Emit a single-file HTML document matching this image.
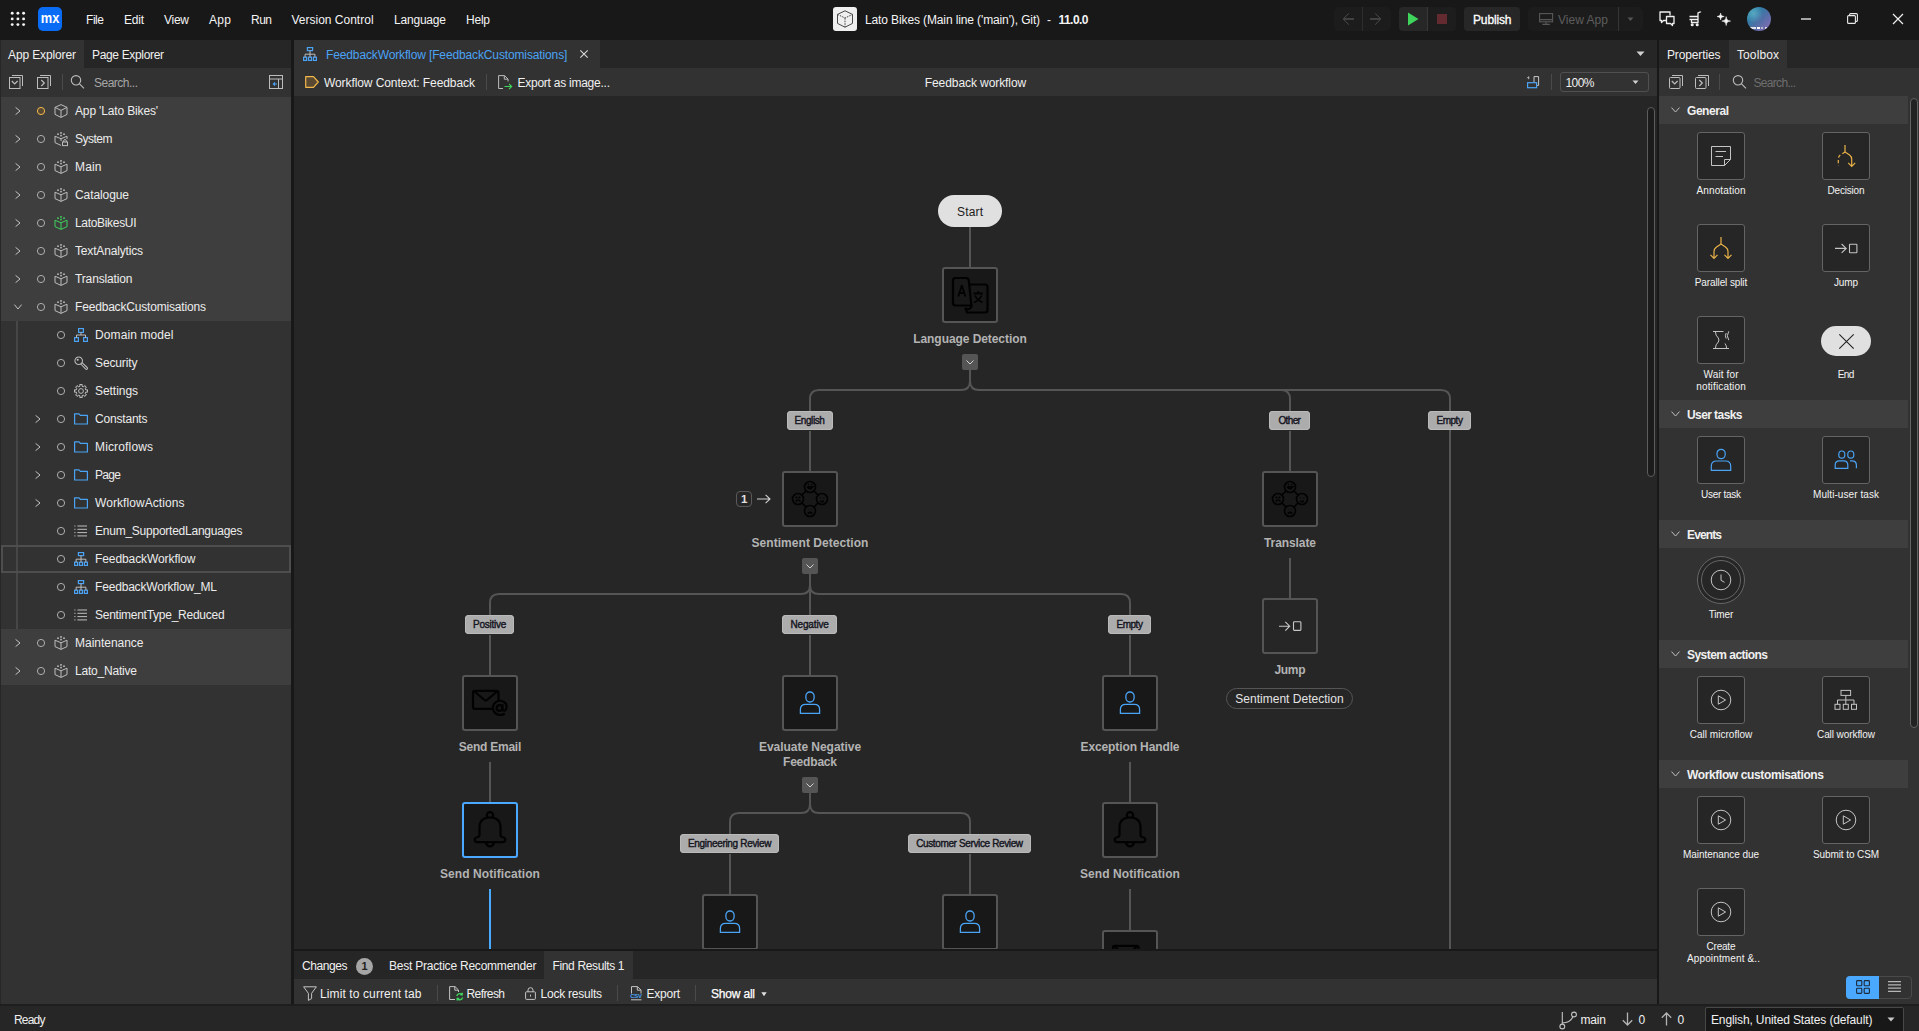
<!DOCTYPE html>
<html><head><meta charset="utf-8"><title>Mendix Studio Pro</title><style>
html,body{margin:0;padding:0;}
body{width:1919px;height:1031px;overflow:hidden;background:#262626;font-family:"Liberation Sans", sans-serif;position:relative;}
.a{position:absolute;}
.t{white-space:nowrap;letter-spacing:-0.2px;}
.t span{display:inline-block;}
svg{overflow:visible;}
</style></head>
<body>
<div class="a" style="left:0px;top:40px;width:1919px;height:964px;background:#181818;"></div>
<div class="a" style="left:0px;top:0px;width:1919px;height:40px;background:#181818;"></div>
<svg class="a" style="left:9.8px;top:11px;" width="16" height="16" viewBox="0 0 16 16"><circle cx="2.2" cy="2.2" r="1.45" fill="#f4f4f4"></circle><circle cx="2.2" cy="7.9" r="1.45" fill="#f4f4f4"></circle><circle cx="2.2" cy="13.600000000000001" r="1.45" fill="#f4f4f4"></circle><circle cx="7.9" cy="2.2" r="1.45" fill="#f4f4f4"></circle><circle cx="7.9" cy="7.9" r="1.45" fill="#f4f4f4"></circle><circle cx="7.9" cy="13.600000000000001" r="1.45" fill="#f4f4f4"></circle><circle cx="13.600000000000001" cy="2.2" r="1.45" fill="#f4f4f4"></circle><circle cx="13.600000000000001" cy="7.9" r="1.45" fill="#f4f4f4"></circle><circle cx="13.600000000000001" cy="13.600000000000001" r="1.45" fill="#f4f4f4"></circle></svg>
<div class="a" style="left:38px;top:7px;width:24px;height:24px;background:#0a6cf5;border-radius:5px;"></div>
<svg class="a" style="left:38px;top:7px;" width="24" height="24" viewBox="0 0 24 24"><text x="2.8" y="15.9" font-family="Liberation Sans" font-weight="bold" font-size="15" fill="#fff" textLength="18.6" lengthAdjust="spacingAndGlyphs">mx</text></svg>
<div class="a t" style="top:11.5px;height:16px;line-height:16px;font-size:12px;color:#f4f4f4;left:86px;"><span style="letter-spacing: -0.45px; margin-right: 0.45px;">File</span></div>
<div class="a t" style="top:11.5px;height:16px;line-height:16px;font-size:12px;color:#f4f4f4;left:124px;"><span style="letter-spacing: -0.23px; margin-right: 0.23px;">Edit</span></div>
<div class="a t" style="top:11.5px;height:16px;line-height:16px;font-size:12px;color:#f4f4f4;left:164px;"><span style="letter-spacing: -0.27px; margin-right: 0.27px;">View</span></div>
<div class="a t" style="top:11.5px;height:16px;line-height:16px;font-size:12px;color:#f4f4f4;left:209px;"><span style="letter-spacing: 0.32px; margin-right: -0.32px;">App</span></div>
<div class="a t" style="top:11.5px;height:16px;line-height:16px;font-size:12px;color:#f4f4f4;left:251px;"><span style="letter-spacing: -0.51px; margin-right: 0.51px;">Run</span></div>
<div class="a t" style="top:11.5px;height:16px;line-height:16px;font-size:12px;color:#f4f4f4;left:291.5px;"><span style="letter-spacing: 0px; margin-right: 0px;">Version Control</span></div>
<div class="a t" style="top:11.5px;height:16px;line-height:16px;font-size:12px;color:#f4f4f4;left:394px;"><span style="letter-spacing: -0.2px; margin-right: 0.2px;">Language</span></div>
<div class="a t" style="top:11.5px;height:16px;line-height:16px;font-size:12px;color:#f4f4f4;left:466px;"><span style="letter-spacing: -0.23px; margin-right: 0.23px;">Help</span></div>
<div class="a" style="left:833px;top:7px;width:24px;height:24px;background:#f0f0f0;border-radius:3px;"></div>
<svg class="a" style="left:836px;top:10px;" width="18" height="18" viewBox="0 0 18 18"><g fill="none" stroke="#4a4a4a" stroke-width="1" stroke-linejoin="round"><path d="M9 0.8 L16.5 4.4 L16.5 13.4 L9 17.2 L1.5 13.4 L1.5 4.4 Z"></path><path d="M1.5 4.4 L9 8 L16.5 4.4 M9 8 L9 17.2" stroke-dasharray="1.6 1"></path></g></svg>
<div class="a t" style="top:11.5px;height:16px;line-height:16px;font-size:12px;color:#f4f4f4;left:865px;"><span style="letter-spacing: -0.12px; margin-right: 0.12px;">Lato Bikes (Main line ('main'), Git)</span></div>
<div class="a t" style="top:11.5px;height:16px;line-height:16px;font-size:12px;color:#f4f4f4;left:1047px;"><span>-</span></div>
<div class="a t" style="top:11.5px;height:16px;line-height:16px;font-size:12px;color:#f4f4f4;font-weight:bold;left:1058.5px;"><span style="letter-spacing: -0.54px; margin-right: 0.54px;">11.0.0</span></div>
<div class="a" style="left:1334px;top:7px;width:57px;height:24px;background:#1c1c1c;border-radius:5px;"></div>
<div class="a" style="left:1362px;top:7px;width:1px;height:24px;background:#2e2e2e;"></div>
<svg class="a" style="left:1342px;top:13px;" width="12" height="12" viewBox="0 0 12 12"><path d="M12 6 H2" fill="none" stroke="#484848" stroke-width="1.7"></path><path d="M6.8 0.4 L1.2 6 L6.8 11.6" fill="none" stroke="#4c4c4c" stroke-width="1"></path></svg>
<svg class="a" style="left:1370px;top:13px;" width="12" height="12" viewBox="0 0 12 12"><path d="M0 6 H10" fill="none" stroke="#484848" stroke-width="1.7"></path><path d="M5.2 0.4 L10.8 6 L5.2 11.6" fill="none" stroke="#4c4c4c" stroke-width="1"></path></svg>
<div class="a" style="left:1399px;top:7px;width:28px;height:24px;background:#272727;border-radius:4px;border-radius:4px 0 0 4px;"></div>
<div class="a" style="left:1427px;top:7px;width:29px;height:24px;background:#1d1d1d;border-radius:0 4px 4px 0;"></div>
<div class="a" style="left:1427px;top:7px;width:1px;height:24px;background:#383838;"></div>
<svg class="a" style="left:1407px;top:12px;" width="12" height="14" viewBox="0 0 12 14"><path d="M1 0.5 L11.5 7 L1 13.5 Z" fill="#3fd45c"></path></svg>
<div class="a" style="left:1437px;top:14px;width:10px;height:10px;background:#632a2f;"></div>
<div class="a" style="left:1464px;top:7px;width:56px;height:24px;background:#272727;border-radius:4px;"></div>
<div class="a t" style="top:11.5px;height:16px;line-height:16px;font-size:12px;color:#ffffff;left:1473px;-webkit-text-stroke:0.3px #fff;"><span style="letter-spacing: -0.14px; margin-right: 0.14px;">Publish</span></div>
<div class="a" style="left:1528px;top:7px;width:115px;height:24px;background:#1c1c1c;border-radius:5px;"></div>
<div class="a" style="left:1618px;top:7px;width:1px;height:24px;background:#353535;"></div>
<svg class="a" style="left:1539px;top:13px;" width="15" height="13" viewBox="0 0 15 13"><g fill="none" stroke="#585858" stroke-width="1.1"><rect x="0.6" y="0.6" width="13" height="8.2"></rect><path d="M0.6 6.6 H13.6 M7.1 8.8 V11.2 M3.4 11.4 H10.8"></path></g></svg>
<div class="a t" style="top:11.5px;height:16px;line-height:16px;font-size:12px;color:#5c5c5c;left:1558px;"><span style="letter-spacing: 0.02px; margin-right: -0.02px;">View App</span></div>
<svg class="a" style="left:1627px;top:17px;" width="8" height="5" viewBox="0 0 8 5"><path d="M0.5 0.5 H6.5 L3.5 4 Z" fill="#555"></path></svg>
<svg class="a" style="left:1659px;top:11px;" width="17" height="16" viewBox="0 0 17 16"><g fill="none" stroke="#f0f0f0" stroke-width="1.3" stroke-linejoin="round"><path d="M7.5 9.5 H4.5 L2.5 11.5 V9.5 H1 V1 H11 V4.5"></path><path d="M7.5 5.5 H15 V12.5 H13.5 V14.5 L11.5 12.5 H7.5 Z" fill="#1b1b1b"></path></g></svg>
<svg class="a" style="left:1689px;top:11px;" width="13" height="16" viewBox="0 0 13 16"><g fill="none" stroke="#f0f0f0" stroke-width="1.3"><path d="M0.5 5.5 H8.5 M0.5 8.5 H8.5 M2.5 8.5 V11.5 H9 V2 L11.5 0.8 V0.5"></path><circle cx="3.2" cy="13.8" r="0.9" fill="#f0f0f0"></circle><circle cx="8.2" cy="13.8" r="0.9" fill="#f0f0f0"></circle></g></svg>
<svg class="a" style="left:1716.5px;top:12.5px;" width="15" height="14" viewBox="0 0 15 14"><g fill="#f8f8f8" stroke="#f8f8f8" stroke-width="0.5" stroke-linejoin="round"><path d="M3.6 0 C4 2.4 4.6 3 7.2 3.5 C4.6 4 4 4.6 3.6 7 C3.2 4.6 2.6 4 0 3.5 C2.6 3 3.2 2.4 3.6 0 Z"></path><path d="M9.2 3.6 C9.7 6.8 10.4 7.6 13.6 8.1 C10.4 8.6 9.7 9.4 9.2 12.6 C8.7 9.4 8 8.6 4.8 8.1 C8 7.6 8.7 6.8 9.2 3.6 Z"></path></g></svg>
<div class="a" style="left:1747px;top:7px;width:24px;height:24px;border-radius:12px;overflow:hidden;background:radial-gradient(circle at 28% 28%, rgba(120,200,215,0.55) 0%, rgba(120,200,215,0) 38%),linear-gradient(135deg,#3f97b2 0%,#2f7da6 30%,#4f6fa6 55%,#7a6cb0 85%,#7058a0 100%);"><div class="a" style="left:3px;top:20px;width:6px;height:1.6px;background:#f0f0f0;opacity:.9"></div><div class="a" style="left:9.5px;top:20px;width:3.5px;height:1.6px;background:#fff;"></div><div class="a" style="left:14px;top:20.4px;width:2px;height:1.2px;background:#ddd;opacity:.7"></div><div class="a" style="left:17.5px;top:20.2px;width:2px;height:1.4px;background:#eee;opacity:.8"></div></div>
<div class="a" style="left:1801px;top:18px;width:10px;height:2px;background:#a4a4a4;"></div>
<svg class="a" style="left:1847px;top:13px;" width="11" height="11" viewBox="0 0 11 11"><g fill="none" stroke="#e8e8e8" stroke-width="1.1"><rect x="0.6" y="2.6" width="7.8" height="7.8" rx="1"></rect><path d="M2.6 2.6 V1.6 Q2.6 0.6 3.6 0.6 H9.4 Q10.4 0.6 10.4 1.6 V7.4 Q10.4 8.4 9.4 8.4 H8.4"></path></g></svg>
<svg class="a" style="left:1893px;top:14px;" width="10" height="10" viewBox="0 0 10 10"><path d="M0 0 L10 10 M10 0 L0 10" stroke="#f0f0f0" stroke-width="1.2" fill="none"></path></svg>
<div class="a" style="left:0px;top:40px;width:291px;height:964px;background:#323232;"></div>
<div class="a" style="left:0px;top:40px;width:1px;height:964px;background:#272727;"></div>
<div class="a" style="left:84px;top:40px;width:207px;height:28px;background:#262626;"></div>
<div class="a t" style="top:46.5px;height:16px;line-height:16px;font-size:12px;color:#f0f0f0;left:8px;"><span style="letter-spacing: -0.12px; margin-right: 0.12px;">App Explorer</span></div>
<div class="a t" style="top:46.5px;height:16px;line-height:16px;font-size:12px;color:#f0f0f0;left:92px;"><span style="letter-spacing: -0.34px; margin-right: 0.34px;">Page Explorer</span></div>
<svg class="a" style="left:9px;top:75px;" width="14" height="14" viewBox="0 0 14 14"><g fill="none" stroke="#bdbdbd" stroke-width="1"><rect x="0.5" y="2.5" width="10.5" height="11"></rect><path d="M3 0.5 H13.5 V11"></path><path d="M2.8 6 L5.7 9 L8.6 6" stroke-width="1.2"></path></g></svg>
<svg class="a" style="left:37px;top:75px;" width="14" height="14" viewBox="0 0 14 14"><g fill="none" stroke="#bdbdbd" stroke-width="1"><rect x="0.5" y="2.5" width="10.5" height="11"></rect><path d="M3 0.5 H13.5 V11"></path><path d="M4.3 5 L7.3 8 L4.3 11" stroke-width="1.2"></path></g></svg>
<div class="a" style="left:62px;top:74px;width:1px;height:16px;background:#4a4a4a;"></div>
<svg class="a" style="left:70px;top:74px;" width="16" height="16" viewBox="0 0 16 16"><g fill="none" stroke="#bdbdbd" stroke-width="1.1"><circle cx="6" cy="6.3" r="4.7"></circle><path d="M9.5 9.9 L14 14.4"></path></g></svg>
<div class="a t" style="top:74.5px;height:16px;line-height:16px;font-size:12px;color:#a6a6a6;left:94px;"><span style="letter-spacing: -0.5px; margin-right: 0.5px;">Search...</span></div>
<svg class="a" style="left:269px;top:75px;" width="14" height="14" viewBox="0 0 14 14"><g fill="none" stroke="#bdbdbd" stroke-width="1"><rect x="0.5" y="0.5" width="13" height="13"></rect><path d="M0.5 4 H13.5 M9.5 4 V13.5"></path></g><path d="M8 9 H4.5 M6 7.3 L4.3 9 L6 10.7" fill="none" stroke="#4aa3f5" stroke-width="1.1"></path></svg>
<div class="a" style="left:1px;top:97px;width:290px;height:224px;background:#3e3e3e;"></div>
<div class="a" style="left:1px;top:629px;width:290px;height:56px;background:#3e3e3e;"></div>
<div class="a" style="left:16px;top:321px;width:2px;height:308px;background:#474747;"></div>
<svg class="a" style="left:14.5px;top:107px;" width="6" height="8" viewBox="0 0 6 8"><path d="M0.6 0.4 L5 4 L0.6 7.6" fill="none" stroke="#c4c4c4" stroke-width="1"></path></svg>
<svg class="a" style="left:36px;top:106px;" width="10" height="10" viewBox="0 0 10 10"><circle cx="5" cy="5" r="3.6" fill="#5a4932" stroke="#f2b84b" stroke-width="1"></circle></svg>
<svg class="a" style="left:54px;top:104px;" width="14" height="14" viewBox="0 0 14 14"><g fill="none" stroke="#bdbdbd" stroke-width="1" stroke-linejoin="round"><path d="M7 0.6 L13 3.4 L13 10.4 L7 13.4 L1 10.4 L1 3.4 Z"></path><path d="M1 3.4 L7 6.4 L13 3.4 M7 6.4 V13.4"></path></g></svg>
<div class="a t" style="top:103.0px;height:16px;line-height:16px;font-size:12px;color:#ececec;left:75px;"><span style="letter-spacing: -0.15px; margin-right: 0.15px;">App 'Lato Bikes'</span></div>
<svg class="a" style="left:14.5px;top:135px;" width="6" height="8" viewBox="0 0 6 8"><path d="M0.6 0.4 L5 4 L0.6 7.6" fill="none" stroke="#c4c4c4" stroke-width="1"></path></svg>
<svg class="a" style="left:36px;top:134px;" width="10" height="10" viewBox="0 0 10 10"><circle cx="5" cy="5" r="3.6" fill="none" stroke="#adadad" stroke-width="1"></circle></svg>
<svg class="a" style="left:54px;top:132px;" width="14" height="14" viewBox="0 0 14 14"><rect x="6.2" y="0.09999999999999998" width="1.6" height="1.6" fill="#bdbdbd"></rect><rect x="3.2" y="1.4000000000000001" width="1.6" height="1.6" fill="#bdbdbd"></rect><rect x="9.2" y="1.4000000000000001" width="1.6" height="1.6" fill="#bdbdbd"></rect><rect x="6.2" y="2.8" width="1.6" height="1.6" fill="#bdbdbd"></rect><g fill="none" stroke="#bdbdbd" stroke-width="1" stroke-linejoin="round"><path d="M1 4.2 V10.6 L7 13.4 "></path><path d="M1 4.2 L7 6.8 L13 4.2 V7 M7 6.8 V9"></path></g><g fill="none" stroke="#bdbdbd" stroke-width="1"><rect x="8.5" y="10" width="5" height="3.6"></rect><path d="M9.7 10 V8.8 Q9.7 7.6 11 7.6 Q12.3 7.6 12.3 8.8 V10"></path></g></svg>
<div class="a t" style="top:131.0px;height:16px;line-height:16px;font-size:12px;color:#ececec;left:75px;"><span style="letter-spacing: -0.5px; margin-right: 0.5px;">System</span></div>
<svg class="a" style="left:14.5px;top:163px;" width="6" height="8" viewBox="0 0 6 8"><path d="M0.6 0.4 L5 4 L0.6 7.6" fill="none" stroke="#c4c4c4" stroke-width="1"></path></svg>
<svg class="a" style="left:36px;top:162px;" width="10" height="10" viewBox="0 0 10 10"><circle cx="5" cy="5" r="3.6" fill="none" stroke="#adadad" stroke-width="1"></circle></svg>
<svg class="a" style="left:54px;top:160px;" width="14" height="14" viewBox="0 0 14 14"><rect x="6.2" y="0.09999999999999998" width="1.6" height="1.6" fill="#bdbdbd"></rect><rect x="3.2" y="1.4000000000000001" width="1.6" height="1.6" fill="#bdbdbd"></rect><rect x="9.2" y="1.4000000000000001" width="1.6" height="1.6" fill="#bdbdbd"></rect><rect x="6.2" y="2.8" width="1.6" height="1.6" fill="#bdbdbd"></rect><g fill="none" stroke="#bdbdbd" stroke-width="1" stroke-linejoin="round"><path d="M1 4.2 V10.6 L7 13.4 L13 10.6 V4.2"></path><path d="M1 4.2 L7 6.8 L13 4.2  M7 6.8 V13.4"></path></g></svg>
<div class="a t" style="top:159.0px;height:16px;line-height:16px;font-size:12px;color:#ececec;left:75px;"><span style="letter-spacing: 0.16px; margin-right: -0.16px;">Main</span></div>
<svg class="a" style="left:14.5px;top:191px;" width="6" height="8" viewBox="0 0 6 8"><path d="M0.6 0.4 L5 4 L0.6 7.6" fill="none" stroke="#c4c4c4" stroke-width="1"></path></svg>
<svg class="a" style="left:36px;top:190px;" width="10" height="10" viewBox="0 0 10 10"><circle cx="5" cy="5" r="3.6" fill="none" stroke="#adadad" stroke-width="1"></circle></svg>
<svg class="a" style="left:54px;top:188px;" width="14" height="14" viewBox="0 0 14 14"><rect x="6.2" y="0.09999999999999998" width="1.6" height="1.6" fill="#bdbdbd"></rect><rect x="3.2" y="1.4000000000000001" width="1.6" height="1.6" fill="#bdbdbd"></rect><rect x="9.2" y="1.4000000000000001" width="1.6" height="1.6" fill="#bdbdbd"></rect><rect x="6.2" y="2.8" width="1.6" height="1.6" fill="#bdbdbd"></rect><g fill="none" stroke="#bdbdbd" stroke-width="1" stroke-linejoin="round"><path d="M1 4.2 V10.6 L7 13.4 L13 10.6 V4.2"></path><path d="M1 4.2 L7 6.8 L13 4.2  M7 6.8 V13.4"></path></g></svg>
<div class="a t" style="top:187.0px;height:16px;line-height:16px;font-size:12px;color:#ececec;left:75px;"><span style="letter-spacing: -0.09px; margin-right: 0.09px;">Catalogue</span></div>
<svg class="a" style="left:14.5px;top:219px;" width="6" height="8" viewBox="0 0 6 8"><path d="M0.6 0.4 L5 4 L0.6 7.6" fill="none" stroke="#c4c4c4" stroke-width="1"></path></svg>
<svg class="a" style="left:36px;top:218px;" width="10" height="10" viewBox="0 0 10 10"><circle cx="5" cy="5" r="3.6" fill="none" stroke="#adadad" stroke-width="1"></circle></svg>
<svg class="a" style="left:54px;top:216px;" width="14" height="14" viewBox="0 0 14 14"><rect x="6.2" y="0.09999999999999998" width="1.6" height="1.6" fill="#3fd45c"></rect><rect x="3.2" y="1.4000000000000001" width="1.6" height="1.6" fill="#3fd45c"></rect><rect x="9.2" y="1.4000000000000001" width="1.6" height="1.6" fill="#3fd45c"></rect><rect x="6.2" y="2.8" width="1.6" height="1.6" fill="#3fd45c"></rect><g fill="none" stroke="#3fd45c" stroke-width="1" stroke-linejoin="round"><path d="M1 4.2 V10.6 L7 13.4 L13 10.6 V4.2"></path><path d="M1 4.2 L7 6.8 L13 4.2  M7 6.8 V13.4"></path></g></svg>
<div class="a t" style="top:215.0px;height:16px;line-height:16px;font-size:12px;color:#ececec;left:75px;"><span style="letter-spacing: -0.32px; margin-right: 0.32px;">LatoBikesUI</span></div>
<svg class="a" style="left:14.5px;top:247px;" width="6" height="8" viewBox="0 0 6 8"><path d="M0.6 0.4 L5 4 L0.6 7.6" fill="none" stroke="#c4c4c4" stroke-width="1"></path></svg>
<svg class="a" style="left:36px;top:246px;" width="10" height="10" viewBox="0 0 10 10"><circle cx="5" cy="5" r="3.6" fill="none" stroke="#adadad" stroke-width="1"></circle></svg>
<svg class="a" style="left:54px;top:244px;" width="14" height="14" viewBox="0 0 14 14"><rect x="6.2" y="0.09999999999999998" width="1.6" height="1.6" fill="#bdbdbd"></rect><rect x="3.2" y="1.4000000000000001" width="1.6" height="1.6" fill="#bdbdbd"></rect><rect x="9.2" y="1.4000000000000001" width="1.6" height="1.6" fill="#bdbdbd"></rect><rect x="6.2" y="2.8" width="1.6" height="1.6" fill="#bdbdbd"></rect><g fill="none" stroke="#bdbdbd" stroke-width="1" stroke-linejoin="round"><path d="M1 4.2 V10.6 L7 13.4 L13 10.6 V4.2"></path><path d="M1 4.2 L7 6.8 L13 4.2  M7 6.8 V13.4"></path></g></svg>
<div class="a t" style="top:243.0px;height:16px;line-height:16px;font-size:12px;color:#ececec;left:75px;"><span style="letter-spacing: -0.17px; margin-right: 0.17px;">TextAnalytics</span></div>
<svg class="a" style="left:14.5px;top:275px;" width="6" height="8" viewBox="0 0 6 8"><path d="M0.6 0.4 L5 4 L0.6 7.6" fill="none" stroke="#c4c4c4" stroke-width="1"></path></svg>
<svg class="a" style="left:36px;top:274px;" width="10" height="10" viewBox="0 0 10 10"><circle cx="5" cy="5" r="3.6" fill="none" stroke="#adadad" stroke-width="1"></circle></svg>
<svg class="a" style="left:54px;top:272px;" width="14" height="14" viewBox="0 0 14 14"><rect x="6.2" y="0.09999999999999998" width="1.6" height="1.6" fill="#bdbdbd"></rect><rect x="3.2" y="1.4000000000000001" width="1.6" height="1.6" fill="#bdbdbd"></rect><rect x="9.2" y="1.4000000000000001" width="1.6" height="1.6" fill="#bdbdbd"></rect><rect x="6.2" y="2.8" width="1.6" height="1.6" fill="#bdbdbd"></rect><g fill="none" stroke="#bdbdbd" stroke-width="1" stroke-linejoin="round"><path d="M1 4.2 V10.6 L7 13.4 L13 10.6 V4.2"></path><path d="M1 4.2 L7 6.8 L13 4.2  M7 6.8 V13.4"></path></g></svg>
<div class="a t" style="top:271.0px;height:16px;line-height:16px;font-size:12px;color:#ececec;left:75px;"><span style="letter-spacing: -0.14px; margin-right: 0.14px;">Translation</span></div>
<svg class="a" style="left:13.5px;top:304px;" width="8" height="6" viewBox="0 0 8 6"><path d="M0.4 0.6 L4 5 L7.6 0.6" fill="none" stroke="#c4c4c4" stroke-width="1"></path></svg>
<svg class="a" style="left:36px;top:302px;" width="10" height="10" viewBox="0 0 10 10"><circle cx="5" cy="5" r="3.6" fill="none" stroke="#adadad" stroke-width="1"></circle></svg>
<svg class="a" style="left:54px;top:300px;" width="14" height="14" viewBox="0 0 14 14"><rect x="6.2" y="0.09999999999999998" width="1.6" height="1.6" fill="#bdbdbd"></rect><rect x="3.2" y="1.4000000000000001" width="1.6" height="1.6" fill="#bdbdbd"></rect><rect x="9.2" y="1.4000000000000001" width="1.6" height="1.6" fill="#bdbdbd"></rect><rect x="6.2" y="2.8" width="1.6" height="1.6" fill="#bdbdbd"></rect><g fill="none" stroke="#bdbdbd" stroke-width="1" stroke-linejoin="round"><path d="M1 4.2 V10.6 L7 13.4 L13 10.6 V4.2"></path><path d="M1 4.2 L7 6.8 L13 4.2  M7 6.8 V13.4"></path></g></svg>
<div class="a t" style="top:299.0px;height:16px;line-height:16px;font-size:12px;color:#ececec;left:75px;"><span style="letter-spacing: -0.18px; margin-right: 0.18px;">FeedbackCustomisations</span></div>
<svg class="a" style="left:56px;top:330px;" width="10" height="10" viewBox="0 0 10 10"><circle cx="5" cy="5" r="3.6" fill="none" stroke="#adadad" stroke-width="1"></circle></svg>
<svg class="a" style="left:74px;top:328px;" width="14" height="14" viewBox="0 0 14 14"><g fill="none" stroke="#4aa3f5" stroke-width="1.2"><rect x="4.6" y="0.6" width="4.8" height="3.8"></rect><rect x="0.6" y="9.6" width="3.8" height="3.8"></rect><rect x="9.6" y="9.6" width="3.8" height="3.8"></rect></g><path d="M7 4.4 V7 M2.5 9.6 V7 H11.5 V9.6" fill="none" stroke="#bdbdbd" stroke-width="1"></path></svg>
<div class="a t" style="top:327.0px;height:16px;line-height:16px;font-size:12px;color:#ececec;left:95px;"><span style="letter-spacing: 0.1px; margin-right: -0.1px;">Domain model</span></div>
<svg class="a" style="left:56px;top:358px;" width="10" height="10" viewBox="0 0 10 10"><circle cx="5" cy="5" r="3.6" fill="none" stroke="#adadad" stroke-width="1"></circle></svg>
<svg class="a" style="left:74px;top:356px;" width="14" height="14" viewBox="0 0 14 14"><g fill="none" stroke="#bdbdbd" stroke-width="1.05" stroke-linejoin="round"><circle cx="4.7" cy="4.7" r="3.8"></circle><circle cx="3.7" cy="3.7" r="0.5" fill="#bdbdbd"></circle><path d="M6.7 8 L11.8 13.1 Q12.6 13.7 13.3 13 Q13.9 12.3 13.2 11.5 L8 6.6"></path></g></svg>
<div class="a t" style="top:355.0px;height:16px;line-height:16px;font-size:12px;color:#ececec;left:95px;"><span style="letter-spacing: -0.12px; margin-right: 0.12px;">Security</span></div>
<svg class="a" style="left:56px;top:386px;" width="10" height="10" viewBox="0 0 10 10"><circle cx="5" cy="5" r="3.6" fill="none" stroke="#adadad" stroke-width="1"></circle></svg>
<svg class="a" style="left:74px;top:384px;" width="14" height="14" viewBox="0 0 14 14"><g fill="none" stroke="#bdbdbd" stroke-width="1" stroke-linejoin="round"><path d="M13.47 5.71 L13.47 8.29 L11.81 7.96 L11.08 9.72 L12.49 10.67 L10.67 12.48 L9.72 11.07 L7.96 11.80 L8.29 13.47 L5.72 13.48 L6.04 11.81 L4.29 11.08 L3.33 12.49 L1.52 10.68 L2.93 9.72 L2.20 7.97 L0.53 8.29 L0.52 5.73 L2.19 6.04 L2.92 4.29 L1.51 3.33 L3.31 1.53 L4.28 2.93 L6.02 2.20 L5.71 0.53 L8.26 0.52 L7.96 2.19 L9.70 2.91 L10.67 1.51 L12.47 3.30 L11.07 4.28 L11.80 6.01 Z"></path><circle cx="7" cy="7" r="2.4"></circle></g></svg>
<div class="a t" style="top:383.0px;height:16px;line-height:16px;font-size:12px;color:#ececec;left:95px;"><span style="letter-spacing: -0.05px; margin-right: 0.05px;">Settings</span></div>
<svg class="a" style="left:34.5px;top:415px;" width="6" height="8" viewBox="0 0 6 8"><path d="M0.6 0.4 L5 4 L0.6 7.6" fill="none" stroke="#c4c4c4" stroke-width="1"></path></svg>
<svg class="a" style="left:56px;top:414px;" width="10" height="10" viewBox="0 0 10 10"><circle cx="5" cy="5" r="3.6" fill="none" stroke="#adadad" stroke-width="1"></circle></svg>
<svg class="a" style="left:74px;top:413px;" width="14" height="12" viewBox="0 0 14 12"><path d="M0.6 0.8 H5 L6.4 2.4 H13.4 V11 H0.6 Z" fill="none" stroke="#4aa3f5" stroke-width="1.2" stroke-linejoin="round"></path></svg>
<div class="a t" style="top:411.0px;height:16px;line-height:16px;font-size:12px;color:#ececec;left:95px;"><span style="letter-spacing: -0.19px; margin-right: 0.19px;">Constants</span></div>
<svg class="a" style="left:34.5px;top:443px;" width="6" height="8" viewBox="0 0 6 8"><path d="M0.6 0.4 L5 4 L0.6 7.6" fill="none" stroke="#c4c4c4" stroke-width="1"></path></svg>
<svg class="a" style="left:56px;top:442px;" width="10" height="10" viewBox="0 0 10 10"><circle cx="5" cy="5" r="3.6" fill="none" stroke="#adadad" stroke-width="1"></circle></svg>
<svg class="a" style="left:74px;top:441px;" width="14" height="12" viewBox="0 0 14 12"><path d="M0.6 0.8 H5 L6.4 2.4 H13.4 V11 H0.6 Z" fill="none" stroke="#4aa3f5" stroke-width="1.2" stroke-linejoin="round"></path></svg>
<div class="a t" style="top:439.0px;height:16px;line-height:16px;font-size:12px;color:#ececec;left:95px;"><span style="letter-spacing: 0.15px; margin-right: -0.15px;">Microflows</span></div>
<svg class="a" style="left:34.5px;top:471px;" width="6" height="8" viewBox="0 0 6 8"><path d="M0.6 0.4 L5 4 L0.6 7.6" fill="none" stroke="#c4c4c4" stroke-width="1"></path></svg>
<svg class="a" style="left:56px;top:470px;" width="10" height="10" viewBox="0 0 10 10"><circle cx="5" cy="5" r="3.6" fill="none" stroke="#adadad" stroke-width="1"></circle></svg>
<svg class="a" style="left:74px;top:469px;" width="14" height="12" viewBox="0 0 14 12"><path d="M0.6 0.8 H5 L6.4 2.4 H13.4 V11 H0.6 Z" fill="none" stroke="#4aa3f5" stroke-width="1.2" stroke-linejoin="round"></path></svg>
<div class="a t" style="top:467.0px;height:16px;line-height:16px;font-size:12px;color:#ececec;left:95px;"><span style="letter-spacing: -0.68px; margin-right: 0.68px;">Page</span></div>
<svg class="a" style="left:34.5px;top:499px;" width="6" height="8" viewBox="0 0 6 8"><path d="M0.6 0.4 L5 4 L0.6 7.6" fill="none" stroke="#c4c4c4" stroke-width="1"></path></svg>
<svg class="a" style="left:56px;top:498px;" width="10" height="10" viewBox="0 0 10 10"><circle cx="5" cy="5" r="3.6" fill="none" stroke="#adadad" stroke-width="1"></circle></svg>
<svg class="a" style="left:74px;top:497px;" width="14" height="12" viewBox="0 0 14 12"><path d="M0.6 0.8 H5 L6.4 2.4 H13.4 V11 H0.6 Z" fill="none" stroke="#4aa3f5" stroke-width="1.2" stroke-linejoin="round"></path></svg>
<div class="a t" style="top:495.0px;height:16px;line-height:16px;font-size:12px;color:#ececec;left:95px;"><span style="letter-spacing: 0.07px; margin-right: -0.07px;">WorkflowActions</span></div>
<svg class="a" style="left:56px;top:526px;" width="10" height="10" viewBox="0 0 10 10"><circle cx="5" cy="5" r="3.6" fill="none" stroke="#adadad" stroke-width="1"></circle></svg>
<svg class="a" style="left:74px;top:525px;" width="14" height="12" viewBox="0 0 14 12"><rect x="0.3" y="0.5" width="1.2" height="1" fill="#bdbdbd"></rect><rect x="3.4" y="0.5" width="9.6" height="1" fill="#bdbdbd"></rect><rect x="0.3" y="3.8" width="1.2" height="1" fill="#bdbdbd"></rect><rect x="3.4" y="3.8" width="9.6" height="1" fill="#bdbdbd"></rect><rect x="0.3" y="7.1" width="1.2" height="1" fill="#bdbdbd"></rect><rect x="3.4" y="7.1" width="9.6" height="1" fill="#bdbdbd"></rect><rect x="0.3" y="10.399999999999999" width="1.2" height="1" fill="#bdbdbd"></rect><rect x="3.4" y="10.399999999999999" width="9.6" height="1" fill="#bdbdbd"></rect></svg>
<div class="a t" style="top:523.0px;height:16px;line-height:16px;font-size:12px;color:#ececec;left:95px;"><span style="letter-spacing: -0.24px; margin-right: 0.24px;">Enum_SupportedLanguages</span></div>
<div class="a" style="left:1px;top:545px;width:290px;height:28px;border:2px solid #4e4e4e;box-sizing:border-box;"></div>
<svg class="a" style="left:56px;top:554px;" width="10" height="10" viewBox="0 0 10 10"><circle cx="5" cy="5" r="3.6" fill="none" stroke="#adadad" stroke-width="1"></circle></svg>
<svg class="a" style="left:74px;top:552px;" width="14" height="14" viewBox="0 0 14 14"><g fill="none" stroke="#4aa3f5" stroke-width="1.2"><rect x="4.4" y="0.6" width="5.2" height="3"></rect><rect x="0.6" y="10.2" width="3" height="3.2"></rect><rect x="5.5" y="10.2" width="3" height="3.2"></rect><rect x="10.4" y="10.2" width="3" height="3.2"></rect></g><path d="M7 3.6 V10.2 M2.1 10.2 V7.2 H11.9 V10.2" fill="none" stroke="#bdbdbd" stroke-width="1"></path></svg>
<div class="a t" style="top:551.0px;height:16px;line-height:16px;font-size:12px;color:#ececec;left:95px;"><span style="letter-spacing: -0.09px; margin-right: 0.09px;">FeedbackWorkflow</span></div>
<svg class="a" style="left:56px;top:582px;" width="10" height="10" viewBox="0 0 10 10"><circle cx="5" cy="5" r="3.6" fill="none" stroke="#adadad" stroke-width="1"></circle></svg>
<svg class="a" style="left:74px;top:580px;" width="14" height="14" viewBox="0 0 14 14"><g fill="none" stroke="#4aa3f5" stroke-width="1.2"><rect x="4.4" y="0.6" width="5.2" height="3"></rect><rect x="0.6" y="10.2" width="3" height="3.2"></rect><rect x="5.5" y="10.2" width="3" height="3.2"></rect><rect x="10.4" y="10.2" width="3" height="3.2"></rect></g><path d="M7 3.6 V10.2 M2.1 10.2 V7.2 H11.9 V10.2" fill="none" stroke="#bdbdbd" stroke-width="1"></path></svg>
<div class="a t" style="top:579.0px;height:16px;line-height:16px;font-size:12px;color:#ececec;left:95px;"><span style="letter-spacing: -0.18px; margin-right: 0.18px;">FeedbackWorkflow_ML</span></div>
<svg class="a" style="left:56px;top:610px;" width="10" height="10" viewBox="0 0 10 10"><circle cx="5" cy="5" r="3.6" fill="none" stroke="#adadad" stroke-width="1"></circle></svg>
<svg class="a" style="left:74px;top:609px;" width="14" height="12" viewBox="0 0 14 12"><rect x="0.3" y="0.5" width="1.2" height="1" fill="#bdbdbd"></rect><rect x="3.4" y="0.5" width="9.6" height="1" fill="#bdbdbd"></rect><rect x="0.3" y="3.8" width="1.2" height="1" fill="#bdbdbd"></rect><rect x="3.4" y="3.8" width="9.6" height="1" fill="#bdbdbd"></rect><rect x="0.3" y="7.1" width="1.2" height="1" fill="#bdbdbd"></rect><rect x="3.4" y="7.1" width="9.6" height="1" fill="#bdbdbd"></rect><rect x="0.3" y="10.399999999999999" width="1.2" height="1" fill="#bdbdbd"></rect><rect x="3.4" y="10.399999999999999" width="9.6" height="1" fill="#bdbdbd"></rect></svg>
<div class="a t" style="top:607.0px;height:16px;line-height:16px;font-size:12px;color:#ececec;left:95px;"><span style="letter-spacing: -0.26px; margin-right: 0.26px;">SentimentType_Reduced</span></div>
<svg class="a" style="left:14.5px;top:639px;" width="6" height="8" viewBox="0 0 6 8"><path d="M0.6 0.4 L5 4 L0.6 7.6" fill="none" stroke="#c4c4c4" stroke-width="1"></path></svg>
<svg class="a" style="left:36px;top:638px;" width="10" height="10" viewBox="0 0 10 10"><circle cx="5" cy="5" r="3.6" fill="none" stroke="#adadad" stroke-width="1"></circle></svg>
<svg class="a" style="left:54px;top:636px;" width="14" height="14" viewBox="0 0 14 14"><rect x="6.2" y="0.09999999999999998" width="1.6" height="1.6" fill="#bdbdbd"></rect><rect x="3.2" y="1.4000000000000001" width="1.6" height="1.6" fill="#bdbdbd"></rect><rect x="9.2" y="1.4000000000000001" width="1.6" height="1.6" fill="#bdbdbd"></rect><rect x="6.2" y="2.8" width="1.6" height="1.6" fill="#bdbdbd"></rect><g fill="none" stroke="#bdbdbd" stroke-width="1" stroke-linejoin="round"><path d="M1 4.2 V10.6 L7 13.4 L13 10.6 V4.2"></path><path d="M1 4.2 L7 6.8 L13 4.2  M7 6.8 V13.4"></path></g></svg>
<div class="a t" style="top:635.0px;height:16px;line-height:16px;font-size:12px;color:#ececec;left:75px;"><span style="letter-spacing: -0.02px; margin-right: 0.02px;">Maintenance</span></div>
<svg class="a" style="left:14.5px;top:667px;" width="6" height="8" viewBox="0 0 6 8"><path d="M0.6 0.4 L5 4 L0.6 7.6" fill="none" stroke="#c4c4c4" stroke-width="1"></path></svg>
<svg class="a" style="left:36px;top:666px;" width="10" height="10" viewBox="0 0 10 10"><circle cx="5" cy="5" r="3.6" fill="none" stroke="#adadad" stroke-width="1"></circle></svg>
<svg class="a" style="left:54px;top:664px;" width="14" height="14" viewBox="0 0 14 14"><rect x="6.2" y="0.09999999999999998" width="1.6" height="1.6" fill="#bdbdbd"></rect><rect x="3.2" y="1.4000000000000001" width="1.6" height="1.6" fill="#bdbdbd"></rect><rect x="9.2" y="1.4000000000000001" width="1.6" height="1.6" fill="#bdbdbd"></rect><rect x="6.2" y="2.8" width="1.6" height="1.6" fill="#bdbdbd"></rect><g fill="none" stroke="#bdbdbd" stroke-width="1" stroke-linejoin="round"><path d="M1 4.2 V10.6 L7 13.4 L13 10.6 V4.2"></path><path d="M1 4.2 L7 6.8 L13 4.2  M7 6.8 V13.4"></path></g></svg>
<div class="a t" style="top:663.0px;height:16px;line-height:16px;font-size:12px;color:#ececec;left:75px;"><span style="letter-spacing: -0.2px; margin-right: 0.2px;">Lato_Native</span></div>
<div class="a" style="left:294px;top:40px;width:1363px;height:28px;background:#262626;"></div>
<div class="a" style="left:294px;top:40px;width:306px;height:28px;background:#323232;"></div>
<svg class="a" style="left:303px;top:47px;" width="14" height="14" viewBox="0 0 14 14"><g fill="none" stroke="#4aa3f5" stroke-width="1.2"><rect x="4.4" y="0.6" width="5.2" height="3"></rect><rect x="0.6" y="10.2" width="3" height="3.2"></rect><rect x="5.5" y="10.2" width="3" height="3.2"></rect><rect x="10.4" y="10.2" width="3" height="3.2"></rect></g><path d="M7 3.6 V10.2 M2.1 10.2 V7.2 H11.9 V10.2" fill="none" stroke="#bdbdbd" stroke-width="1"></path></svg>
<div class="a t" style="top:46.5px;height:16px;line-height:16px;font-size:12px;color:#4aa3f5;left:326px;"><span style="letter-spacing: -0.13px; margin-right: 0.13px;">FeedbackWorkflow [FeedbackCustomisations]</span></div>
<svg class="a" style="left:580px;top:50px;" width="8" height="8" viewBox="0 0 8 8"><path d="M0.3 0.3 L7.7 7.7 M7.7 0.3 L0.3 7.7" stroke="#d8d8d8" stroke-width="1.1" fill="none"></path></svg>
<svg class="a" style="left:1636px;top:51px;" width="9" height="6" viewBox="0 0 9 6"><path d="M0.5 0.5 H8.5 L4.5 5 Z" fill="#d0d0d0"></path></svg>
<div class="a" style="left:294px;top:68px;width:1363px;height:28px;background:#323232;"></div>
<svg class="a" style="left:305px;top:76px;" width="14" height="12" viewBox="0 0 14 12"><path d="M0.7 0.7 H8.5 L13.3 6 L8.5 11.3 H0.7 Z" fill="#5a4932" stroke="#f2b84b" stroke-width="1.2" stroke-linejoin="round"></path></svg>
<div class="a t" style="top:74.5px;height:16px;line-height:16px;font-size:12px;color:#f0f0f0;left:324px;"><span style="letter-spacing: -0.09px; margin-right: 0.09px;">Workflow Context: Feedback</span></div>
<div class="a" style="left:486px;top:74px;width:1px;height:16px;background:#4a4a4a;"></div>
<svg class="a" style="left:498px;top:75px;" width="15" height="15" viewBox="0 0 15 15"><path d="M5 13.5 H0.6 V0.6 H6.5 L10 4 V6.5 M6.3 0.8 V4.2 H9.8" fill="none" stroke="#bdbdbd" stroke-width="1"></path><path d="M6.5 11.5 H13.5 M11 8.8 L13.7 11.5 L11 14.2" fill="none" stroke="#3fd45c" stroke-width="1.1"></path></svg>
<div class="a t" style="top:74.5px;height:16px;line-height:16px;font-size:12px;color:#f0f0f0;left:517.5px;"><span style="letter-spacing: -0.25px; margin-right: 0.25px;">Export as image...</span></div>
<div class="a t" style="top:74.5px;height:16px;line-height:16px;font-size:12px;color:#f0f0f0;left:924.75px;"><span style="letter-spacing: -0.08px; margin-right: 0.08px;">Feedback workflow</span></div>
<svg class="a" style="left:1526px;top:75px;" width="14" height="14" viewBox="0 0 14 14"><rect x="1.6" y="7.7" width="9" height="5" fill="none" stroke="#4aa3f5" stroke-width="1.2"></rect><path d="M8 7 V1.6 H12.6 V10.4 H11.2" fill="none" stroke="#c8c8c8" stroke-width="1"></path><path d="M1.2 3.2 L2.6 1.6 L2.6 4.2 M2.6 2.9 H3.4" fill="none" stroke="#bdbdbd" stroke-width="0.9"></path></svg>
<div class="a" style="left:1551px;top:74px;width:1px;height:16px;background:#4a4a4a;"></div>
<div class="a" style="left:1560px;top:72px;width:89px;height:20px;border:1px solid #505050;box-sizing:border-box;border-radius:3px;"></div>
<div class="a t" style="top:74.5px;height:16px;line-height:16px;font-size:12px;color:#f0f0f0;left:1565.5px;"><span style="letter-spacing: -0.57px; margin-right: 0.57px;">100%</span></div>
<svg class="a" style="left:1632px;top:80px;" width="8" height="5" viewBox="0 0 8 5"><path d="M0.5 0.5 H6.5 L3.5 4 Z" fill="#d0d0d0"></path></svg>
<div class="a" style="left:294px;top:96px;width:1363px;height:853px;background:#262626;"></div>
<div class="a" style="left:1647px;top:107px;width:8px;height:370px;background:#1c1c1c;border:1.2px solid #5c5c5c;box-sizing:border-box;border-radius:4px;"></div>
<div class="a" style="left:294px;top:96px;width:1353px;height:853px;overflow:hidden;"><div class="a" style="left:-294px;top:-96px;">
<div class="a" style="left:938px;top:195px;width:64px;height:32px;background:#e0e0e0;border-radius:16px;"></div>
<div class="a t" style="top:203.8px;height:16px;line-height:16px;font-size:12px;color:#1a1a1a;left:957.0px;"><span style="letter-spacing: 0.16px; margin-right: -0.16px;">Start</span></div>
<div class="a" style="left:969px;top:227px;width:2px;height:41px;background:#555555;"></div>
<div class="a" style="left:942px;top:267px;width:56px;height:56px;background:#181818;border:2px solid #555555;box-sizing:border-box;border-radius:3px;"></div>
<svg class="a" style="left:942px;top:267px;" width="56" height="56" viewBox="0 0 56 56"><g fill="none" stroke="#020202" stroke-width="2.2" stroke-linejoin="round" stroke-linecap="round"><path d="M25 45.5 H43 Q45.5 45.5 45.5 43 V20 Q45.5 17.5 43 17.5 H27.5"></path><path d="M13.5 11 H24 Q26.5 11 26.8 13.5 L29.4 38.5 H13.5 Q11 38.5 11 36 V13.5 Q11 11 13.5 11 Z" fill="#181818"></path><path d="M29.4 38.5 Q29.6 41 27 42 Q25 42.5 23.5 41.5 L25 45.2"></path></g><g fill="none" stroke="#020202" stroke-width="1.8" stroke-linejoin="round"><path d="M16.2 29.5 L19.8 18.6 L23.4 29.5 M17.4 26 H22.2"></path><path d="M31.5 26.5 H41 M36.2 24 V26.5 M33 28.5 Q35 33 40.5 35.5 M39.5 28.5 Q37.5 33 32 35.5"></path></g></svg>
<div class="a t" style="top:331.0px;height:16px;line-height:16px;font-size:12px;color:#b3b3b3;font-weight:bold;left:913.25px;"><span style="letter-spacing: -0.07px; margin-right: 0.07px;">Language Detection</span></div>
<div class="a" style="left:962px;top:354px;width:16px;height:16px;background:#555555;border-radius:2px;"></div>
<svg class="a" style="left:966px;top:360px;" width="8" height="5" viewBox="0 0 8 5"><path d="M0.5 0.5 L4 4 L7.5 0.5" fill="none" stroke="#d0d0d0" stroke-width="1"></path></svg>
<svg class="a" style="left:808px;top:370px;" width="644" height="44" viewBox="0 0 644 44"><path d="M162 0 V11 Q162 20 153 20 H11 Q2 20 2 29 V42 M162 0 V11 Q162 20 171 20 H473 Q482 20 482 29 V42 M162 0 V11 Q162 20 171 20 H633 Q642 20 642 29 V42 " fill="none" stroke="#555555" stroke-width="2"></path></svg>
<div class="a" style="left:1449px;top:430px;width:2px;height:520px;background:#555555;"></div>
<div class="a" style="left:786.65px;top:410.8px;width:46.3px;height:19.7px;background:#acacac;border-radius:4px;box-shadow:0 0 0 1px #bababa inset;"></div>
<div class="a t" style="top:414.2px;height:14px;line-height:14px;font-size:10px;color:#15151f;left:794.45px;-webkit-text-stroke:0.4px #15151f;"><span style="letter-spacing: -0.39px; margin-right: 0.39px;">English</span></div>
<div class="a" style="left:1269.3999999999999px;top:410.8px;width:40.8px;height:19.7px;background:#acacac;border-radius:4px;box-shadow:0 0 0 1px #bababa inset;"></div>
<div class="a t" style="top:414.2px;height:14px;line-height:14px;font-size:10px;color:#15151f;left:1278.45px;-webkit-text-stroke:0.4px #15151f;"><span style="letter-spacing: -0.63px; margin-right: 0.63px;">Other</span></div>
<div class="a" style="left:1428.3999999999999px;top:410.8px;width:42.8px;height:19.7px;background:#acacac;border-radius:4px;box-shadow:0 0 0 1px #bababa inset;"></div>
<div class="a t" style="top:414.2px;height:14px;line-height:14px;font-size:10px;color:#15151f;left:1436.45px;-webkit-text-stroke:0.4px #15151f;"><span style="letter-spacing: -0.46px; margin-right: 0.46px;">Empty</span></div>
<div class="a" style="left:809px;top:431px;width:2px;height:41px;background:#555555;"></div>
<div class="a" style="left:1289px;top:431px;width:2px;height:41px;background:#555555;"></div>
<div class="a" style="left:782px;top:471px;width:56px;height:56px;background:#181818;border:2px solid #555555;box-sizing:border-box;border-radius:3px;"></div>
<svg class="a" style="left:782px;top:471px;" width="56" height="56" viewBox="0 0 56 56"><g fill="none" stroke="#020202" stroke-width="1.6"><path d="M28 16 L40 28 L28 40 L16 28 Z"></path><circle cx="28" cy="16" r="5.5" fill="#181818"></circle><circle cx="16" cy="28" r="5.5" fill="#181818"></circle><circle cx="40" cy="28" r="5.5" fill="#181818"></circle><circle cx="28" cy="40" r="5.5" fill="#181818"></circle><path d="M25.3 15.8 H30.7 Q28 20 25.3 15.8 M25.8 13.8 L26.8 13.2 M30.2 13.8 L29.2 13.2 M13.6 30.4 Q16 27.6 18.4 30.4 M13.8 26 L15.3 27 M18.2 26 L16.7 27 M38 30.4 H42 M38.4 26.6 V27.2 M41.6 26.6 V27.2 M25.8 42.6 Q28 40.2 30.2 42.6 M26.4 38 V38.6 M29.6 38 V38.6"></path></g></svg>
<div class="a" style="left:1262px;top:471px;width:56px;height:56px;background:#181818;border:2px solid #555555;box-sizing:border-box;border-radius:3px;"></div>
<svg class="a" style="left:1262px;top:471px;" width="56" height="56" viewBox="0 0 56 56"><g fill="none" stroke="#020202" stroke-width="1.6"><path d="M28 16 L40 28 L28 40 L16 28 Z"></path><circle cx="28" cy="16" r="5.5" fill="#181818"></circle><circle cx="16" cy="28" r="5.5" fill="#181818"></circle><circle cx="40" cy="28" r="5.5" fill="#181818"></circle><circle cx="28" cy="40" r="5.5" fill="#181818"></circle><path d="M25.3 15.8 H30.7 Q28 20 25.3 15.8 M25.8 13.8 L26.8 13.2 M30.2 13.8 L29.2 13.2 M13.6 30.4 Q16 27.6 18.4 30.4 M13.8 26 L15.3 27 M18.2 26 L16.7 27 M38 30.4 H42 M38.4 26.6 V27.2 M41.6 26.6 V27.2 M25.8 42.6 Q28 40.2 30.2 42.6 M26.4 38 V38.6 M29.6 38 V38.6"></path></g></svg>
<div class="a t" style="top:535.0px;height:16px;line-height:16px;font-size:12px;color:#b3b3b3;font-weight:bold;left:751.5px;"><span style="letter-spacing: 0.05px; margin-right: -0.05px;">Sentiment Detection</span></div>
<div class="a t" style="top:535.0px;height:16px;line-height:16px;font-size:12px;color:#b3b3b3;font-weight:bold;left:1264.0px;"><span style="letter-spacing: -0.09px; margin-right: 0.09px;">Translate</span></div>
<div class="a" style="left:736px;top:491px;width:16px;height:16px;border:1px solid #5a5a5a;box-sizing:border-box;border-radius:4px;"></div>
<div class="a t" style="top:491.0px;height:16px;line-height:16px;font-size:11.5px;color:#e0e0e0;font-weight:bold;left:544px;width:400px;text-align:center;"><span>1</span></div>
<svg class="a" style="left:757px;top:494px;" width="14" height="10" viewBox="0 0 14 10"><path d="M0 5 H13 M8.6 0.8 L13 5 L8.6 9.2" fill="none" stroke="#d0d0d0" stroke-width="1.1"></path></svg>
<div class="a" style="left:802px;top:558px;width:16px;height:16px;background:#555555;border-radius:2px;"></div>
<svg class="a" style="left:806px;top:564px;" width="8" height="5" viewBox="0 0 8 5"><path d="M0.5 0.5 L4 4 L7.5 0.5" fill="none" stroke="#d0d0d0" stroke-width="1"></path></svg>
<svg class="a" style="left:488px;top:574px;" width="644" height="44" viewBox="0 0 644 44"><path d="M322 0 V11 Q322 20 313 20 H11 Q2 20 2 29 V42 M322 0 V42 M322 0 V11 Q322 20 331 20 H633 Q642 20 642 29 V42 " fill="none" stroke="#555555" stroke-width="2"></path></svg>
<div class="a" style="left:465.15000000000003px;top:614.8px;width:49.3px;height:19.7px;background:#acacac;border-radius:4px;box-shadow:0 0 0 1px #bababa inset;"></div>
<div class="a t" style="top:618.2px;height:14px;line-height:14px;font-size:10px;color:#15151f;left:472.95px;-webkit-text-stroke:0.4px #15151f;"><span style="letter-spacing: -0.22px; margin-right: 0.22px;">Positive</span></div>
<div class="a" style="left:782.4px;top:614.8px;width:54.8px;height:19.7px;background:#acacac;border-radius:4px;box-shadow:0 0 0 1px #bababa inset;"></div>
<div class="a t" style="top:618.2px;height:14px;line-height:14px;font-size:10px;color:#15151f;left:790.45px;-webkit-text-stroke:0.4px #15151f;"><span style="letter-spacing: -0.14px; margin-right: 0.14px;">Negative</span></div>
<div class="a" style="left:1108.3999999999999px;top:614.8px;width:42.8px;height:19.7px;background:#acacac;border-radius:4px;box-shadow:0 0 0 1px #bababa inset;"></div>
<div class="a t" style="top:618.2px;height:14px;line-height:14px;font-size:10px;color:#15151f;left:1116.45px;-webkit-text-stroke:0.4px #15151f;"><span style="letter-spacing: -0.46px; margin-right: 0.46px;">Empty</span></div>
<div class="a" style="left:489px;top:635px;width:2px;height:41px;background:#555555;"></div>
<div class="a" style="left:809px;top:635px;width:2px;height:41px;background:#555555;"></div>
<div class="a" style="left:1129px;top:635px;width:2px;height:41px;background:#555555;"></div>
<div class="a" style="left:462px;top:675px;width:56px;height:56px;background:#181818;border:2px solid #555555;box-sizing:border-box;border-radius:3px;"></div>
<svg class="a" style="left:462px;top:675px;" width="56" height="56" viewBox="0 0 56 56"><g fill="none" stroke="#020202" stroke-width="2.2" stroke-linejoin="round" stroke-linecap="round"><path d="M36.5 26 V17.5 Q36.5 15.8 34.8 15.8 H12.7 Q11 15.8 11 17.5 V32 Q11 33.8 12.7 33.8 H30"></path><path d="M12.5 16.5 L22.5 25 Q23.8 26 25 25 L35 16.5"></path><circle cx="37.5" cy="33" r="2.8"></circle><path d="M40.5 30 V34.5 Q41.5 36.5 43.5 35 Q45.5 32 44 29 Q41 24.8 36 26 Q30.5 28 31 33.5 Q32 39.5 38 40 Q40.5 40 42 39"></path></g></svg>
<div class="a" style="left:782px;top:675px;width:56px;height:56px;background:#181818;border:2px solid #555555;box-sizing:border-box;border-radius:3px;"></div>
<svg class="a" style="left:782px;top:675px;" width="56" height="56" viewBox="0 0 56 56"><g fill="none" stroke="#4aa3f5" stroke-width="1.3"><rect x="23.9" y="17" width="8.2" height="10" rx="4" ry="4.2"></rect><path d="M18.4 38.4 V34.6 Q18.4 29.4 23.6 29.4 H32.4 Q37.6 29.4 37.6 34.6 V38.4 Z"></path></g></svg>
<div class="a" style="left:1102px;top:675px;width:56px;height:56px;background:#181818;border:2px solid #555555;box-sizing:border-box;border-radius:3px;"></div>
<svg class="a" style="left:1102px;top:675px;" width="56" height="56" viewBox="0 0 56 56"><g fill="none" stroke="#4aa3f5" stroke-width="1.3"><rect x="23.9" y="17" width="8.2" height="10" rx="4" ry="4.2"></rect><path d="M18.4 38.4 V34.6 Q18.4 29.4 23.6 29.4 H32.4 Q37.6 29.4 37.6 34.6 V38.4 Z"></path></g></svg>
<div class="a t" style="top:739.0px;height:16px;line-height:16px;font-size:12px;color:#b3b3b3;font-weight:bold;left:458.75px;"><span style="letter-spacing: -0.24px; margin-right: 0.24px;">Send Email</span></div>
<div class="a t" style="top:739.0px;height:16px;line-height:16px;font-size:12px;color:#b3b3b3;font-weight:bold;left:759.0px;"><span style="letter-spacing: -0.04px; margin-right: 0.04px;">Evaluate Negative</span></div>
<div class="a t" style="top:754.0px;height:16px;line-height:16px;font-size:12px;color:#b3b3b3;font-weight:bold;left:783.0px;"><span style="letter-spacing: -0.19px; margin-right: 0.19px;">Feedback</span></div>
<div class="a t" style="top:739.0px;height:16px;line-height:16px;font-size:12px;color:#b3b3b3;font-weight:bold;left:1080.5px;"><span style="letter-spacing: -0.11px; margin-right: 0.11px;">Exception Handle</span></div>
<div class="a" style="left:1289px;top:558px;width:2px;height:41px;background:#555555;"></div>
<div class="a" style="left:1262px;top:598px;width:56px;height:56px;border:2px solid #555555;box-sizing:border-box;border-radius:3px;"></div>
<svg class="a" style="left:1262px;top:598px;" width="56" height="56" viewBox="0 0 56 56"><g fill="none" stroke="#c8c8c8" stroke-width="1.1"><path d="M17 28.2 H27.5 M23.3 23.8 L27.7 28.2 L23.3 32.6"></path><rect x="31.5" y="23.8" width="7.4" height="8.6" rx="0.8"></rect></g></svg>
<div class="a t" style="top:662.0px;height:16px;line-height:16px;font-size:12px;color:#b3b3b3;font-weight:bold;left:1274.5px;"><span style="letter-spacing: -0.34px; margin-right: 0.34px;">Jump</span></div>
<div class="a" style="left:1226px;top:687.5px;width:127px;height:21.5px;border:1px solid #555;box-sizing:border-box;border-radius:11px;"></div>
<div class="a t" style="top:690.5px;height:16px;line-height:16px;font-size:12px;color:#e4e4e4;left:1235.25px;"><span style="letter-spacing: 0.02px; margin-right: -0.02px;">Sentiment Detection</span></div>
<div class="a" style="left:489px;top:762px;width:2px;height:41px;background:#555555;"></div>
<div class="a" style="left:462px;top:802px;width:56px;height:56px;background:#181818;border:2px solid #4aa8ff;box-sizing:border-box;border-radius:3px;"></div>
<svg class="a" style="left:462px;top:802px;" width="56" height="56" viewBox="0 0 56 56"><g fill="none" stroke="#020202" stroke-width="2.2" stroke-linejoin="round" stroke-linecap="round"><circle cx="28" cy="13.3" r="3.2"></circle><path d="M17.5 33 V25.5 Q17.5 15.5 28 15.5 Q38.5 15.5 38.5 25.5 V33 Q38.5 34.5 40 35 Q43.3 35.5 43.3 37.6 Q43.3 40.2 40.5 40.2 H15.5 Q12.7 40.2 12.7 37.6 Q12.7 35.5 16 35 Q17.5 34.5 17.5 33 Z" fill="#181818"></path><path d="M24 41 Q24.8 44.3 28 44.3 Q31.2 44.3 32 41"></path></g></svg>
<div class="a t" style="top:866.0px;height:16px;line-height:16px;font-size:12px;color:#b3b3b3;font-weight:bold;left:440.0px;"><span style="letter-spacing: 0.08px; margin-right: -0.08px;">Send Notification</span></div>
<div class="a" style="left:489px;top:889px;width:2px;height:61px;background:#4aa8ff;"></div>
<div class="a" style="left:802px;top:777px;width:16px;height:16px;background:#555555;border-radius:2px;"></div>
<svg class="a" style="left:806px;top:783px;" width="8" height="5" viewBox="0 0 8 5"><path d="M0.5 0.5 L4 4 L7.5 0.5" fill="none" stroke="#d0d0d0" stroke-width="1"></path></svg>
<svg class="a" style="left:728px;top:793px;" width="244" height="44" viewBox="0 0 244 44"><path d="M82 0 V11 Q82 20 73 20 H11 Q2 20 2 29 V42 M82 0 V11 Q82 20 91 20 H233 Q242 20 242 29 V42 " fill="none" stroke="#555555" stroke-width="2"></path></svg>
<div class="a" style="left:680.15px;top:833.8px;width:99.3px;height:19.7px;background:#acacac;border-radius:4px;box-shadow:0 0 0 1px #bababa inset;"></div>
<div class="a t" style="top:837.2px;height:14px;line-height:14px;font-size:10px;color:#15151f;left:687.95px;-webkit-text-stroke:0.4px #15151f;"><span style="letter-spacing: -0.32px; margin-right: 0.32px;">Engineering Review</span></div>
<div class="a" style="left:908.15px;top:833.8px;width:123.3px;height:19.7px;background:#acacac;border-radius:4px;box-shadow:0 0 0 1px #bababa inset;"></div>
<div class="a t" style="top:837.2px;height:14px;line-height:14px;font-size:10px;color:#15151f;left:916.2px;-webkit-text-stroke:0.4px #15151f;"><span style="letter-spacing: -0.37px; margin-right: 0.37px;">Customer Service Review</span></div>
<div class="a" style="left:729px;top:854px;width:2px;height:41px;background:#555555;"></div>
<div class="a" style="left:969px;top:854px;width:2px;height:41px;background:#555555;"></div>
<div class="a" style="left:702px;top:894px;width:56px;height:56px;background:#181818;border:2px solid #555555;box-sizing:border-box;border-radius:3px;"></div>
<svg class="a" style="left:702px;top:894px;" width="56" height="56" viewBox="0 0 56 56"><g fill="none" stroke="#4aa3f5" stroke-width="1.3"><rect x="23.9" y="17" width="8.2" height="10" rx="4" ry="4.2"></rect><path d="M18.4 38.4 V34.6 Q18.4 29.4 23.6 29.4 H32.4 Q37.6 29.4 37.6 34.6 V38.4 Z"></path></g></svg>
<div class="a" style="left:942px;top:894px;width:56px;height:56px;background:#181818;border:2px solid #555555;box-sizing:border-box;border-radius:3px;"></div>
<svg class="a" style="left:942px;top:894px;" width="56" height="56" viewBox="0 0 56 56"><g fill="none" stroke="#4aa3f5" stroke-width="1.3"><rect x="23.9" y="17" width="8.2" height="10" rx="4" ry="4.2"></rect><path d="M18.4 38.4 V34.6 Q18.4 29.4 23.6 29.4 H32.4 Q37.6 29.4 37.6 34.6 V38.4 Z"></path></g></svg>
<div class="a" style="left:1129px;top:762px;width:2px;height:41px;background:#555555;"></div>
<div class="a" style="left:1102px;top:802px;width:56px;height:56px;background:#181818;border:2px solid #555555;box-sizing:border-box;border-radius:3px;"></div>
<svg class="a" style="left:1102px;top:802px;" width="56" height="56" viewBox="0 0 56 56"><g fill="none" stroke="#020202" stroke-width="2.2" stroke-linejoin="round" stroke-linecap="round"><circle cx="28" cy="13.3" r="3.2"></circle><path d="M17.5 33 V25.5 Q17.5 15.5 28 15.5 Q38.5 15.5 38.5 25.5 V33 Q38.5 34.5 40 35 Q43.3 35.5 43.3 37.6 Q43.3 40.2 40.5 40.2 H15.5 Q12.7 40.2 12.7 37.6 Q12.7 35.5 16 35 Q17.5 34.5 17.5 33 Z" fill="#181818"></path><path d="M24 41 Q24.8 44.3 28 44.3 Q31.2 44.3 32 41"></path></g></svg>
<div class="a t" style="top:866.0px;height:16px;line-height:16px;font-size:12px;color:#b3b3b3;font-weight:bold;left:1080.0px;"><span style="letter-spacing: 0.08px; margin-right: -0.08px;">Send Notification</span></div>
<div class="a" style="left:1129px;top:889px;width:2px;height:42px;background:#555555;"></div>
<div class="a" style="left:1102px;top:930px;width:56px;height:56px;background:#181818;border:2px solid #555555;box-sizing:border-box;border-radius:3px;"></div>
<svg class="a" style="left:1102px;top:930px;" width="56" height="56" viewBox="0 0 56 56"><g fill="none" stroke="#020202" stroke-width="2.2" stroke-linejoin="round" stroke-linecap="round"><path d="M36.5 26 V17.5 Q36.5 15.8 34.8 15.8 H12.7 Q11 15.8 11 17.5 V32 Q11 33.8 12.7 33.8 H30"></path><path d="M12.5 16.5 L22.5 25 Q23.8 26 25 25 L35 16.5"></path><circle cx="37.5" cy="33" r="2.8"></circle><path d="M40.5 30 V34.5 Q41.5 36.5 43.5 35 Q45.5 32 44 29 Q41 24.8 36 26 Q30.5 28 31 33.5 Q32 39.5 38 40 Q40.5 40 42 39"></path></g></svg>
</div></div>
<div class="a" style="left:1659px;top:40px;width:260px;height:964px;background:#323232;"></div>
<div class="a" style="left:1659px;top:40px;width:260px;height:28px;background:#262626;"></div>
<div class="a" style="left:1729px;top:40px;width:58px;height:28px;background:#323232;"></div>
<div class="a t" style="top:46.5px;height:16px;line-height:16px;font-size:12px;color:#f0f0f0;left:1667px;"><span style="letter-spacing: -0.13px; margin-right: 0.13px;">Properties</span></div>
<div class="a t" style="top:46.5px;height:16px;line-height:16px;font-size:12px;color:#f0f0f0;left:1737px;"><span style="letter-spacing: 0.1px; margin-right: -0.1px;">Toolbox</span></div>
<svg class="a" style="left:1669px;top:75px;" width="14" height="14" viewBox="0 0 14 14"><g fill="none" stroke="#bdbdbd" stroke-width="1"><rect x="0.5" y="2.5" width="10.5" height="11" rx="1"></rect><path d="M3 0.5 H13.5 V11"></path><path d="M2.8 6 L5.7 9 L8.6 6" stroke-width="1.2"></path></g></svg>
<svg class="a" style="left:1695px;top:75px;" width="14" height="14" viewBox="0 0 14 14"><g fill="none" stroke="#bdbdbd" stroke-width="1"><rect x="0.5" y="2.5" width="10.5" height="11" rx="1"></rect><path d="M3 0.5 H13.5 V11"></path><path d="M4.3 5 L7.3 8 L4.3 11" stroke-width="1.2"></path></g></svg>
<div class="a" style="left:1719px;top:74px;width:1px;height:16px;background:#4a4a4a;"></div>
<svg class="a" style="left:1732px;top:74px;" width="16" height="16" viewBox="0 0 16 16"><g fill="none" stroke="#bdbdbd" stroke-width="1.1"><circle cx="6" cy="6.3" r="4.7"></circle><path d="M9.5 9.9 L14 14.4"></path></g></svg>
<div class="a t" style="top:74.5px;height:16px;line-height:16px;font-size:12px;color:#6e6e6e;left:1753.5px;"><span style="letter-spacing: -0.69px; margin-right: 0.69px;">Search...</span></div>
<div class="a" style="left:1910px;top:98px;width:8px;height:630px;background:#222222;border:1.2px solid #626262;box-sizing:border-box;border-radius:4px;"></div>
<div class="a" style="left:1659px;top:96px;width:249px;height:28px;background:#3e3e3e;"></div>
<svg class="a" style="left:1671px;top:107px;" width="9" height="6" viewBox="0 0 9 6"><path d="M0.5 0.6 L4.5 5 L8.5 0.6" fill="none" stroke="#c0c0c0" stroke-width="1"></path></svg>
<div class="a t" style="top:102.8px;height:16px;line-height:16px;font-size:12px;color:#f0f0f0;font-weight:bold;left:1687px;"><span style="letter-spacing: -0.45px; margin-right: 0.45px;">General</span></div>
<div class="a" style="left:1697px;top:132px;width:48px;height:48px;background:#262626;border:1px solid #646464;box-sizing:border-box;border-radius:3px;"></div>
<svg class="a" style="left:1697px;top:132px;" width="48" height="48" viewBox="0 0 48 48"><g fill="none" stroke="#c4c4c4" stroke-width="1"><path d="M14.5 14.5 H33.5 V27.5 L27.5 33.5 H14.5 Z M27.5 33.5 V27.5 H33.5"></path><path d="M18.5 19.5 H29 M18.5 24.5 H26"></path></g></svg>
<div class="a t" style="top:183.9px;height:14px;line-height:14px;font-size:10px;color:#f2f2f2;left:1696.5px;"><span style="letter-spacing: 0.13px; margin-right: -0.13px;">Annotation</span></div>
<div class="a" style="left:1822px;top:132px;width:48px;height:48px;background:#262626;border:1px solid #646464;box-sizing:border-box;border-radius:3px;"></div>
<svg class="a" style="left:1822px;top:132px;" width="48" height="48" viewBox="0 0 48 48"><g fill="none" stroke="#e9b248" stroke-width="1.2"><path d="M23 13 V20 L27.6 23 Q29.7 24.6 29.7 27.2 V34 M26.2 30.8 L29.7 34.3 L33.2 30.8"></path><path d="M23 20 L18.4 23 Q16.3 24.6 16.3 27.2 V34" stroke-dasharray="3.2 2.4"></path></g></svg>
<div class="a t" style="top:183.9px;height:14px;line-height:14px;font-size:10px;color:#f2f2f2;left:1827.5px;"><span style="letter-spacing: -0.19px; margin-right: 0.19px;">Decision</span></div>
<div class="a" style="left:1697px;top:224px;width:48px;height:48px;background:#262626;border:1px solid #646464;box-sizing:border-box;border-radius:3px;"></div>
<svg class="a" style="left:1697px;top:224px;" width="48" height="48" viewBox="0 0 48 48"><g fill="none" stroke="#e9b248" stroke-width="1.2"><path d="M24 13 V20 L28.8 23.2 Q31 24.8 31 27.4 V34 M27.5 30.8 L31 34.3 L34.5 30.8"></path><path d="M24 20 L19.2 23.2 Q17 24.8 17 27.4 V34 M13.5 30.8 L17 34.3 L20.5 30.8"></path></g></svg>
<div class="a t" style="top:275.9px;height:14px;line-height:14px;font-size:10px;color:#f2f2f2;left:1694.75px;"><span style="letter-spacing: -0.11px; margin-right: 0.11px;">Parallel split</span></div>
<div class="a" style="left:1822px;top:224px;width:48px;height:48px;background:#262626;border:1px solid #646464;box-sizing:border-box;border-radius:3px;"></div>
<svg class="a" style="left:1822px;top:224px;" width="48" height="48" viewBox="0 0 48 48"><g fill="none" stroke="#c4c4c4" stroke-width="1.1"><path d="M13 24.4 H24 M19.6 20 L24.2 24.4 L19.6 28.8"></path><rect x="27.5" y="20.2" width="7.4" height="8.6" rx="0.6"></rect></g></svg>
<div class="a t" style="top:275.9px;height:14px;line-height:14px;font-size:10px;color:#f2f2f2;left:1834.0px;"><span style="letter-spacing: -0.15px; margin-right: 0.15px;">Jump</span></div>
<div class="a" style="left:1697px;top:316px;width:48px;height:48px;background:#262626;border:1px solid #646464;box-sizing:border-box;border-radius:3px;"></div>
<svg class="a" style="left:1697px;top:316px;" width="48" height="48" viewBox="0 0 48 48"><g fill="none" stroke="#c4c4c4" stroke-width="1"><path d="M16 15.5 H26.5 M16 32.5 H32 M18.4 15.5 Q18.4 19.5 21.3 22 Q22.6 24 21.3 26 Q18.4 28.5 18.4 32.5 M29.6 32.5 Q29.6 29.5 28 27.5"></path><path d="M29.2 17 Q27.5 19.8 29.2 22.5 M31.8 15.3 Q28.8 19.8 31.8 24.2"></path></g></svg>
<div class="a t" style="top:367.9px;height:14px;line-height:14px;font-size:10px;color:#f2f2f2;left:1703.5px;"><span style="letter-spacing: 0.13px; margin-right: -0.13px;">Wait for</span></div>
<div class="a t" style="top:379.5px;height:14px;line-height:14px;font-size:10px;color:#f2f2f2;left:1696.25px;"><span style="letter-spacing: 0.15px; margin-right: -0.15px;">notification</span></div>
<div class="a" style="left:1821px;top:326px;width:50px;height:30px;background:#e0e0e0;border-radius:15px;"></div>
<svg class="a" style="left:1838.5px;top:333.5px;" width="15" height="15" viewBox="0 0 15 15"><path d="M0.3 0.3 L14.7 14.7 M14.7 0.3 L0.3 14.7" stroke="#222" stroke-width="1.1" fill="none"></path></svg>
<div class="a t" style="top:367.9px;height:14px;line-height:14px;font-size:10px;color:#f2f2f2;left:1837.75px;"><span style="letter-spacing: -0.65px; margin-right: 0.65px;">End</span></div>
<div class="a" style="left:1659px;top:400px;width:249px;height:28px;background:#3e3e3e;"></div>
<svg class="a" style="left:1671px;top:411px;" width="9" height="6" viewBox="0 0 9 6"><path d="M0.5 0.6 L4.5 5 L8.5 0.6" fill="none" stroke="#c0c0c0" stroke-width="1"></path></svg>
<div class="a t" style="top:406.8px;height:16px;line-height:16px;font-size:12px;color:#f0f0f0;font-weight:bold;left:1687px;"><span style="letter-spacing: -0.58px; margin-right: 0.58px;">User tasks</span></div>
<div class="a" style="left:1697px;top:436px;width:48px;height:48px;background:#262626;border:1px solid #646464;box-sizing:border-box;border-radius:3px;"></div>
<svg class="a" style="left:1697px;top:436px;" width="48" height="48" viewBox="0 0 48 48"><g fill="none" stroke="#4aa3f5" stroke-width="1.2"><rect x="20" y="13.3" width="8.2" height="9.4" rx="4" ry="4.2"></rect><path d="M14.3 34.4 V30.2 Q14.3 25 19.5 25 H28.5 Q33.7 25 33.7 30.2 V34.4 Z"></path></g></svg>
<div class="a t" style="top:487.9px;height:14px;line-height:14px;font-size:10px;color:#f2f2f2;left:1701.0px;"><span style="letter-spacing: -0.28px; margin-right: 0.28px;">User task</span></div>
<div class="a" style="left:1822px;top:436px;width:48px;height:48px;background:#262626;border:1px solid #646464;box-sizing:border-box;border-radius:3px;"></div>
<svg class="a" style="left:1822px;top:436px;" width="48" height="48" viewBox="0 0 48 48"><g fill="none" stroke="#4aa3f5" stroke-width="1.2"><rect x="16.8" y="15" width="6" height="7.2" rx="3" ry="3.2"></rect><rect x="25.8" y="15" width="6" height="7.2" rx="3" ry="3.2"></rect><path d="M13.2 32.3 V29 Q13.2 24.8 17.4 24.8 H21.6 Q25.8 24.8 25.8 29 V32.3 Z"></path><path d="M28 24.8 H30 Q34.4 24.8 34.4 29.2 V32.3"></path></g></svg>
<div class="a t" style="top:487.9px;height:14px;line-height:14px;font-size:10px;color:#f2f2f2;left:1813.0px;"><span style="letter-spacing: 0.07px; margin-right: -0.07px;">Multi-user task</span></div>
<div class="a" style="left:1659px;top:520px;width:249px;height:28px;background:#3e3e3e;"></div>
<svg class="a" style="left:1671px;top:531px;" width="9" height="6" viewBox="0 0 9 6"><path d="M0.5 0.6 L4.5 5 L8.5 0.6" fill="none" stroke="#c0c0c0" stroke-width="1"></path></svg>
<div class="a t" style="top:526.8px;height:16px;line-height:16px;font-size:12px;color:#f0f0f0;font-weight:bold;left:1687px;"><span style="letter-spacing: -0.87px; margin-right: 0.87px;">Events</span></div>
<div class="a" style="left:1697px;top:556px;width:48px;height:48px;border-radius:24px;background:#262626;border:1px solid #666;box-sizing:border-box;"></div>
<div class="a" style="left:1701px;top:560px;width:40px;height:40px;border-radius:20px;border:1px solid #666;box-sizing:border-box;"></div>
<svg class="a" style="left:1697px;top:556px;" width="48" height="48" viewBox="0 0 48 48"><g fill="none" stroke="#c4c4c4" stroke-width="1"><circle cx="24" cy="24" r="9.8"></circle><path d="M24 18.5 V24.3 L27.5 26.3"></path></g></svg>
<div class="a t" style="top:607.9px;height:14px;line-height:14px;font-size:10px;color:#f2f2f2;left:1708.75px;"><span style="letter-spacing: -0.17px; margin-right: 0.17px;">Timer</span></div>
<div class="a" style="left:1659px;top:640px;width:249px;height:28px;background:#3e3e3e;"></div>
<svg class="a" style="left:1671px;top:651px;" width="9" height="6" viewBox="0 0 9 6"><path d="M0.5 0.6 L4.5 5 L8.5 0.6" fill="none" stroke="#c0c0c0" stroke-width="1"></path></svg>
<div class="a t" style="top:646.8px;height:16px;line-height:16px;font-size:12px;color:#f0f0f0;font-weight:bold;left:1687px;"><span style="letter-spacing: -0.54px; margin-right: 0.54px;">System actions</span></div>
<div class="a" style="left:1697px;top:676px;width:48px;height:48px;background:#262626;border:1px solid #646464;box-sizing:border-box;border-radius:3px;"></div>
<svg class="a" style="left:1697px;top:676px;" width="48" height="48" viewBox="0 0 48 48"><g fill="none" stroke="#c4c4c4" stroke-width="1"><circle cx="24" cy="24" r="9.8"></circle><path d="M21.3 19.8 L28.6 24 L21.3 28.2 Z"></path></g></svg>
<div class="a t" style="top:727.9px;height:14px;line-height:14px;font-size:10px;color:#f2f2f2;left:1689.75px;"><span style="letter-spacing: 0.02px; margin-right: -0.02px;">Call microflow</span></div>
<div class="a" style="left:1822px;top:676px;width:48px;height:48px;background:#262626;border:1px solid #646464;box-sizing:border-box;border-radius:3px;"></div>
<svg class="a" style="left:1822px;top:676px;" width="48" height="48" viewBox="0 0 48 48"><g fill="none" stroke="#c4c4c4" stroke-width="1"><rect x="19" y="14.4" width="9.6" height="5"></rect><rect x="13" y="28.3" width="5" height="5"></rect><rect x="21.3" y="28.3" width="5" height="5"></rect><rect x="29.5" y="28.3" width="5" height="5"></rect><path d="M23.8 19.4 V28.3 M15.5 28.3 V24 H32 V28.3"></path></g></svg>
<div class="a t" style="top:727.9px;height:14px;line-height:14px;font-size:10px;color:#f2f2f2;left:1817.0px;"><span style="letter-spacing: -0.08px; margin-right: 0.08px;">Call workflow</span></div>
<div class="a" style="left:1659px;top:760px;width:249px;height:28px;background:#3e3e3e;"></div>
<svg class="a" style="left:1671px;top:771px;" width="9" height="6" viewBox="0 0 9 6"><path d="M0.5 0.6 L4.5 5 L8.5 0.6" fill="none" stroke="#c0c0c0" stroke-width="1"></path></svg>
<div class="a t" style="top:766.8px;height:16px;line-height:16px;font-size:12px;color:#f0f0f0;font-weight:bold;left:1687px;"><span style="letter-spacing: -0.37px; margin-right: 0.37px;">Workflow customisations</span></div>
<div class="a" style="left:1697px;top:796px;width:48px;height:48px;background:#262626;border:1px solid #646464;box-sizing:border-box;border-radius:3px;"></div>
<svg class="a" style="left:1697px;top:796px;" width="48" height="48" viewBox="0 0 48 48"><g fill="none" stroke="#c4c4c4" stroke-width="1"><circle cx="24" cy="24" r="9.8"></circle><path d="M21.3 19.8 L28.6 24 L21.3 28.2 Z"></path></g></svg>
<div class="a t" style="top:847.9px;height:14px;line-height:14px;font-size:10px;color:#f2f2f2;left:1683.0px;"><span style="letter-spacing: -0.05px; margin-right: 0.05px;">Maintenance due</span></div>
<div class="a" style="left:1822px;top:796px;width:48px;height:48px;background:#262626;border:1px solid #646464;box-sizing:border-box;border-radius:3px;"></div>
<svg class="a" style="left:1822px;top:796px;" width="48" height="48" viewBox="0 0 48 48"><g fill="none" stroke="#c4c4c4" stroke-width="1"><circle cx="24" cy="24" r="9.8"></circle><path d="M21.3 19.8 L28.6 24 L21.3 28.2 Z"></path></g></svg>
<div class="a t" style="top:847.9px;height:14px;line-height:14px;font-size:10px;color:#f2f2f2;left:1813.0px;"><span style="letter-spacing: -0.1px; margin-right: 0.1px;">Submit to CSM</span></div>
<div class="a" style="left:1697px;top:888px;width:48px;height:48px;background:#262626;border:1px solid #646464;box-sizing:border-box;border-radius:3px;"></div>
<svg class="a" style="left:1697px;top:888px;" width="48" height="48" viewBox="0 0 48 48"><g fill="none" stroke="#c4c4c4" stroke-width="1"><circle cx="24" cy="24" r="9.8"></circle><path d="M21.3 19.8 L28.6 24 L21.3 28.2 Z"></path></g></svg>
<div class="a t" style="top:939.9px;height:14px;line-height:14px;font-size:10px;color:#f2f2f2;left:1706.5px;"><span style="letter-spacing: -0.2px; margin-right: 0.2px;">Create</span></div>
<div class="a t" style="top:951.5px;height:14px;line-height:14px;font-size:10px;color:#f2f2f2;left:1687.0px;"><span style="letter-spacing: 0.13px; margin-right: -0.13px;">Appointment &amp;..</span></div>
<div class="a" style="left:1846px;top:975.6px;width:65.5px;height:23px;border:1px solid #4a4a4a;box-sizing:border-box;border-radius:4px;"></div>
<div class="a" style="left:1846px;top:975.6px;width:33px;height:23px;background:#4aa8ff;border-radius:4px 0 0 4px;"></div>
<svg class="a" style="left:1855.5px;top:979.8px;" width="14" height="14" viewBox="0 0 14 14"><rect x="0.6" y="0.6" width="5.2" height="5.2" rx="0.8" fill="none" stroke="#1c2a3a" stroke-width="1.1"></rect><rect x="0.6" y="8.2" width="5.2" height="5.2" rx="0.8" fill="none" stroke="#1c2a3a" stroke-width="1.1"></rect><rect x="8.2" y="0.6" width="5.2" height="5.2" rx="0.8" fill="none" stroke="#1c2a3a" stroke-width="1.1"></rect><rect x="8.2" y="8.2" width="5.2" height="5.2" rx="0.8" fill="none" stroke="#1c2a3a" stroke-width="1.1"></rect></svg>
<svg class="a" style="left:1888px;top:981px;" width="13" height="11" viewBox="0 0 13 11"><rect x="0" y="0.2" width="13" height="1" fill="#d8d8d8"></rect><rect x="0" y="3.4000000000000004" width="13" height="1" fill="#d8d8d8"></rect><rect x="0" y="6.6000000000000005" width="13" height="1" fill="#d8d8d8"></rect><rect x="0" y="9.8" width="13" height="1" fill="#d8d8d8"></rect></svg>
<div class="a" style="left:294px;top:951px;width:1363px;height:28px;background:#262626;"></div>
<div class="a" style="left:544px;top:951px;width:89px;height:28px;background:#323232;"></div>
<div class="a t" style="top:957.5px;height:16px;line-height:16px;font-size:12px;color:#f0f0f0;left:302px;"><span style="letter-spacing: -0.42px; margin-right: 0.42px;">Changes</span></div>
<div class="a" style="left:356px;top:957.5px;width:17px;height:17px;background:#a6a6a6;border-radius:9px;"></div>
<div class="a t" style="top:958.0px;height:16px;line-height:16px;font-size:11px;color:#222;font-weight:bold;left:164.5px;width:400px;text-align:center;"><span>1</span></div>
<div class="a t" style="top:957.5px;height:16px;line-height:16px;font-size:12px;color:#f0f0f0;left:389px;"><span style="letter-spacing: -0.22px; margin-right: 0.22px;">Best Practice Recommender</span></div>
<div class="a t" style="top:957.5px;height:16px;line-height:16px;font-size:12px;color:#f0f0f0;left:552.5px;"><span style="letter-spacing: -0.36px; margin-right: 0.36px;">Find Results 1</span></div>
<div class="a" style="left:294px;top:979px;width:1363px;height:25px;background:#323232;"></div>
<svg class="a" style="left:302.5px;top:986px;" width="15" height="16" viewBox="0 0 15 16"><path d="M0.6 0.8 H13.4 L8.6 7.3 V12.6 L5.4 14.4 V7.3 Z" fill="none" stroke="#c4c4c4" stroke-width="1" stroke-linejoin="round"></path></svg>
<div class="a t" style="top:985.5px;height:16px;line-height:16px;font-size:12px;color:#f0f0f0;left:320px;"><span style="letter-spacing: 0.11px; margin-right: -0.11px;">Limit to current tab</span></div>
<div class="a" style="left:437px;top:985px;width:1px;height:16px;background:#4a4a4a;"></div>
<svg class="a" style="left:449px;top:986px;" width="15" height="16" viewBox="0 0 15 16"><path d="M6 13.5 H0.6 V0.6 H6 L9.5 4 V6 M5.8 0.8 V4.2 H9.3" fill="none" stroke="#c4c4c4" stroke-width="1"></path><g fill="none" stroke="#3fd45c" stroke-width="1.4"><path d="M7.8 10 Q8.5 7.6 10.8 7.6 Q12.2 7.6 13 8.6 M13.2 6.8 V8.9 H11.2"></path><path d="M13.6 11.4 Q13 13.8 10.6 13.8 Q9.2 13.8 8.4 12.8 M8.2 14.6 V12.5 H10.2"></path></g></svg>
<div class="a t" style="top:985.5px;height:16px;line-height:16px;font-size:12px;color:#f0f0f0;left:466.5px;"><span style="letter-spacing: -0.59px; margin-right: 0.59px;">Refresh</span></div>
<svg class="a" style="left:524.5px;top:986.5px;" width="11" height="13" viewBox="0 0 11 13"><g fill="none" stroke="#c4c4c4" stroke-width="1"><rect x="0.6" y="4.8" width="9.8" height="7.6" rx="0.8"></rect><path d="M3 4.8 V3 Q3 0.7 5.5 0.7 Q8 0.7 8 3 V4.8 M5.5 7.6 V9.6"></path></g></svg>
<div class="a t" style="top:985.5px;height:16px;line-height:16px;font-size:12px;color:#f0f0f0;left:540.5px;"><span style="letter-spacing: -0.23px; margin-right: 0.23px;">Lock results</span></div>
<div class="a" style="left:617px;top:985px;width:1px;height:16px;background:#4a4a4a;"></div>
<svg class="a" style="left:630px;top:986px;" width="13" height="15" viewBox="0 0 13 15"><path d="M1.5 7.5 V0.6 H7.5 L11 4 V7.5 M7.3 0.8 V4.2 H10.8 M1 13.8 H11.5" fill="none" stroke="#c4c4c4" stroke-width="1"></path><text x="0.2" y="12.2" font-size="6" font-weight="bold" font-family="Liberation Sans" fill="#4aa3f5" letter-spacing="-0.3">CSV</text></svg>
<div class="a t" style="top:985.5px;height:16px;line-height:16px;font-size:12px;color:#f0f0f0;left:646.5px;"><span style="letter-spacing: -0.24px; margin-right: 0.24px;">Export</span></div>
<div class="a" style="left:695px;top:985px;width:1px;height:16px;background:#4a4a4a;"></div>
<div class="a t" style="top:985.5px;height:16px;line-height:16px;font-size:12px;color:#ffffff;left:711px;-webkit-text-stroke:0.25px #fff;"><span style="letter-spacing: -0.19px; margin-right: 0.19px;">Show all</span></div>
<svg class="a" style="left:761px;top:991.5px;" width="6" height="5" viewBox="0 0 6 5"><path d="M0.3 0.3 H5.7 L3 4.3 Z" fill="#e0e0e0"></path></svg>
<div class="a" style="left:0px;top:1004px;width:1919px;height:27px;background:#262626;"></div>
<div class="a" style="left:0px;top:1004px;width:1919px;height:1.5px;background:#1e1e1e;"></div>
<div class="a t" style="top:1011.5px;height:16px;line-height:16px;font-size:12px;color:#f0f0f0;left:14px;"><span style="letter-spacing: -0.8px; margin-right: 0.8px;">Ready</span></div>
<svg class="a" style="left:1558.5px;top:1010.5px;" width="19" height="19" viewBox="0 0 19 19"><g fill="none" stroke="#c4c4c4" stroke-width="1.1"><circle cx="3.3" cy="15.5" r="2.4"></circle><circle cx="15" cy="3.5" r="2.4"></circle><path d="M3.3 13 V1 M3.3 12 Q11 12 14 5.8"></path></g></svg>
<div class="a t" style="top:1011.5px;height:16px;line-height:16px;font-size:12px;color:#f0f0f0;left:1580.5px;"><span style="letter-spacing: -0.17px; margin-right: 0.17px;">main</span></div>
<svg class="a" style="left:1621.5px;top:1012px;" width="11" height="14" viewBox="0 0 11 14"><path d="M5.5 0.5 V13 M0.8 8.3 L5.5 13 L10.2 8.3" fill="none" stroke="#b4b4b4" stroke-width="1.3"></path></svg>
<div class="a t" style="top:1011.5px;height:16px;line-height:16px;font-size:12px;color:#f0f0f0;left:1638.5px;"><span>0</span></div>
<svg class="a" style="left:1660.5px;top:1012px;" width="11" height="14" viewBox="0 0 11 14"><path d="M5.5 13.5 V1 M0.8 5.7 L5.5 1 L10.2 5.7" fill="none" stroke="#b4b4b4" stroke-width="1.3"></path></svg>
<div class="a t" style="top:1011.5px;height:16px;line-height:16px;font-size:12px;color:#f0f0f0;left:1677.5px;"><span>0</span></div>
<div class="a" style="left:1705px;top:1007px;width:198.5px;height:26px;background:#181818;border:1px solid #484848;box-sizing:border-box;border-radius:2px;"></div>
<div class="a t" style="top:1011.5px;height:16px;line-height:16px;font-size:12px;color:#f0f0f0;left:1711px;"><span style="letter-spacing: -0.13px; margin-right: 0.13px;">English, United States (default)</span></div>
<svg class="a" style="left:1886.5px;top:1017px;" width="9" height="6" viewBox="0 0 9 6"><path d="M0.5 0.5 H7.5 L4 4.5 Z" fill="#c8c8c8"></path></svg>

</body></html>
